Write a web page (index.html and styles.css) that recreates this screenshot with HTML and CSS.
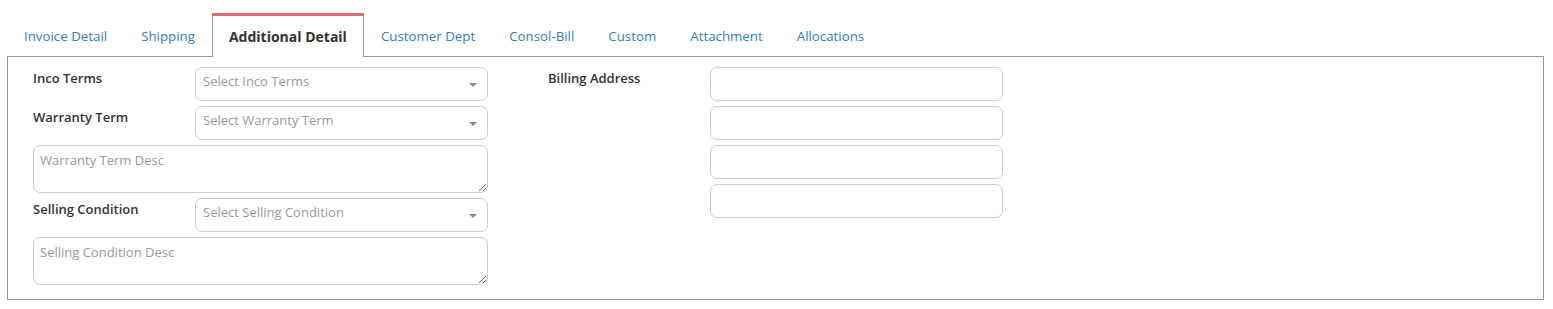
FILE: index.html
```html
<!DOCTYPE html>
<html>
<head>
<meta charset="utf-8">
<link rel="stylesheet" href="styles.css">
</head>
<body>
<div class="page">
  <ul class="tabs">
    <li class="tab">Invoice Detail</li>
    <li class="tab">Shipping</li>
    <li class="tab active">Additional Detail</li>
    <li class="tab">Customer Dept</li>
    <li class="tab">Consol-Bill</li>
    <li class="tab">Custom</li>
    <li class="tab">Attachment</li>
    <li class="tab">Allocations</li>
  </ul>
  <div class="panel">
    <div class="col">
      <div class="row">
        <label class="lbl">Inco Terms</label>
        <div class="select"><span class="ph">Select Inco Terms</span><span class="caret"></span></div>
      </div>
      <div class="row">
        <label class="lbl">Warranty Term</label>
        <div class="select"><span class="ph">Select Warranty Term</span><span class="caret"></span></div>
      </div>
      <textarea class="area" placeholder="Warranty Term Desc"></textarea>
      <div class="row">
        <label class="lbl">Selling Condition</label>
        <div class="select"><span class="ph">Select Selling Condition</span><span class="caret"></span></div>
      </div>
      <textarea class="area" placeholder="Selling Condition Desc"></textarea>
    </div>
    <div class="col">
      <div class="row">
        <label class="lbl">Billing Address</label>
        <div class="inputs">
          <input class="inp" type="text">
          <input class="inp" type="text">
          <input class="inp" type="text">
          <input class="inp" type="text">
        </div>
      </div>
    </div>
  </div>
</div>
</body>
</html>
```

FILE: styles.css
```css
* { box-sizing: border-box; }
html, body { margin: 0; padding: 0; background: #fff; }
body {
  font-family: "Open Sans", "Noto Sans", sans-serif;
  font-size: 12.5px;
  color: #333;
}
.page { padding: 13px 9px 0 7px; }
.tabs {
  list-style: none;
  margin: 0;
  padding: 0;
  display: flex;
  position: relative;
  z-index: 1;
}
.tab {
  border-top: 3px solid transparent;
  border-left: 1px solid transparent;
  border-right: 1px solid transparent;
  padding: 1px 16px 0;
  line-height: 39px;
  height: 44px;
  font-size: 13.3px;
  color: #2f7fc1;
  margin-bottom: -1px;
}
.tab.active {
  border-top-color: #e5686f;
  border-left-color: #999;
  border-right-color: #999;
  background: #fff;
  color: #333;
  font-weight: 700;
  font-size: 14px;
}
.panel {
  border: 1px solid #999;
  height: 244px;
  padding: 10px 0 0 25px;
  display: flex;
  gap: 60px;
}
.col {
  width: 455px;
  display: flex;
  flex-direction: column;
  gap: 5px;
}
.row { display: flex; align-items: flex-start; }
.lbl {
  width: 162px;
  flex: none;
  font-weight: 600;
  font-size: 13px;
  padding-top: 1px;
  line-height: 20px;
}
.select {
  width: 293px;
  height: 34px;
  border: 1px solid #c8cdd8;
  border-radius: 7px;
  display: flex;
  align-items: center;
  justify-content: space-between;
  padding: 0 10px 0 7px;
}
.ph { color: #999; font-size: 13px; line-height: 18px; margin-top: -6px; }
.caret {
  width: 0; height: 0;
  border-left: 4px solid transparent;
  border-right: 4px solid transparent;
  border-top: 4px solid #888;
  margin-top: 2px;
}
.area {
  width: 455px;
  height: 48px;
  border: 1px solid #c8cdd8;
  border-radius: 7px;
  padding: 5px 6px;
  font-family: "Open Sans", "Noto Sans", sans-serif;
  font-size: 13px;
  color: #333;
  resize: vertical;
  margin: 0;
  display: block;
}
.area::placeholder { color: #999; }
.inputs { display: flex; flex-direction: column; gap: 5px; }
.inp {
  width: 293px;
  height: 34px;
  border: 1px solid #ccc;
  border-radius: 7px;
  margin: 0;
  padding: 0 7px;
  display: block;
}
```
